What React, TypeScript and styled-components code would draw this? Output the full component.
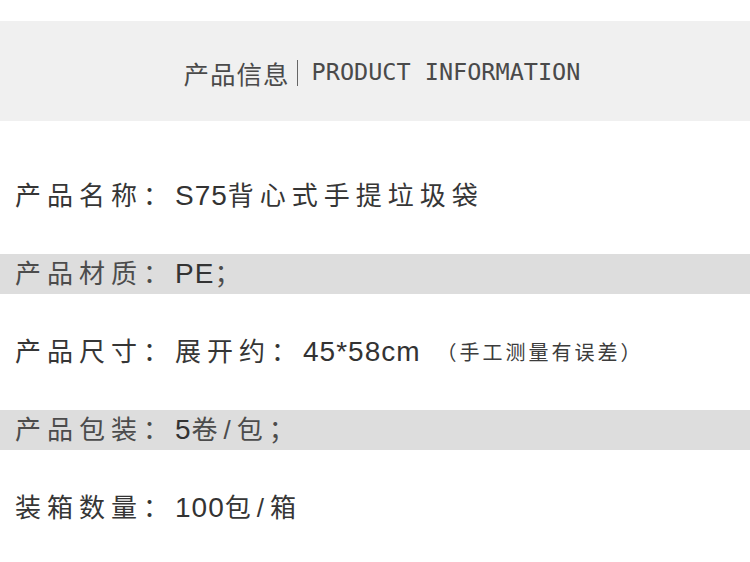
import styled, { createGlobalStyle } from "styled-components";

const GlobalStyle = createGlobalStyle`
  html, body {
    margin: 0;
    padding: 0;
    background: #fff;
  }
`;

const specs = [
  { label: "产品名称：", value: [{ t: "S75", latin: true }, { t: "背心式手提垃圾袋" }] },
  { label: "产品材质：", value: [{ t: "PE", latin: true }, { t: "；" }], shaded: true },
  {
    label: "产品尺寸：",
    value: [{ t: "展开约：" }, { t: "45*58cm", latin: true }],
    note: "（手工测量有误差）",
  },
  { label: "产品包装：", value: [{ t: "5", latin: true }, { t: "卷/包；" }], shaded: true },
  { label: "装箱数量：", value: [{ t: "100", latin: true }, { t: "包/箱" }] },
];

const App = () => {
  return (
    <Page>
      <GlobalStyle />
      <Header>
        <HeaderCn>产品信息</HeaderCn>
        <Divider />
        <HeaderEn>PRODUCT INFORMATION</HeaderEn>
      </Header>
      <SpecList>
        {specs.map((row, i) => (
          <SpecRow key={i} $shaded={!!row.shaded}>
            <SpecText $shaded={!!row.shaded}>
              {row.label}
              {row.value.map((part, j) =>
                part.latin ? <Latin key={j}>{part.t}</Latin> : <span key={j}>{part.t}</span>
              )}
            </SpecText>
            {row.note && <Note>{row.note}</Note>}
          </SpecRow>
        ))}
      </SpecList>
    </Page>
  );
};

export default App;

const Page = styled.div`
  width: 750px;
  height: 562px;
  padding-top: 21px;
  box-sizing: border-box;
  overflow: hidden;
  background: #fff;
`;

const Header = styled.div`
  height: 100px;
  background: #f0f0f0;
  display: flex;
  align-items: center;
  justify-content: center;
  padding-left: 14px;
  padding-top: 3px;
  box-sizing: border-box;
  color: #4a4a4a;
`;

const HeaderCn = styled.span`
  font-family: "Noto Sans CJK SC", sans-serif;
  font-size: 25.5px;
  letter-spacing: 1px;
  line-height: 1;
`;

const Divider = styled.span`
  width: 1px;
  height: 26px;
  background: #666;
  margin: 0 14px 0 7px;
`;

const HeaderEn = styled.span`
  font-family: "DejaVu Sans Mono", monospace;
  font-size: 23.5px;
  line-height: 1;
`;

const SpecList = styled.div`
  margin-top: 55px;
  display: flex;
  flex-direction: column;
  gap: 38px;
`;

const SpecRow = styled.div<{ $shaded: boolean }>`
  height: 40px;
  display: flex;
  align-items: center;
  padding-left: 15px;
  background: ${(p) => (p.$shaded ? "#dddddd" : "transparent")};
`;

const SpecText = styled.span<{ $shaded: boolean }>`
  font-family: "Liberation Sans", "Noto Sans CJK SC", sans-serif;
  font-size: 26px;
  letter-spacing: 6px;
  line-height: 1;
  color: ${(p) => (p.$shaded ? "#4c4c4c" : "#363636")};
  white-space: nowrap;
`;

const Latin = styled.span`
  font-size: 28px;
  letter-spacing: 1px;
  color: #333;
`;

const Note = styled.span`
  font-family: "Noto Sans CJK SC", sans-serif;
  font-size: 20px;
  letter-spacing: 3px;
  line-height: 1;
  color: #3c3c3c;
  margin-left: 16px;
  white-space: nowrap;
`;
